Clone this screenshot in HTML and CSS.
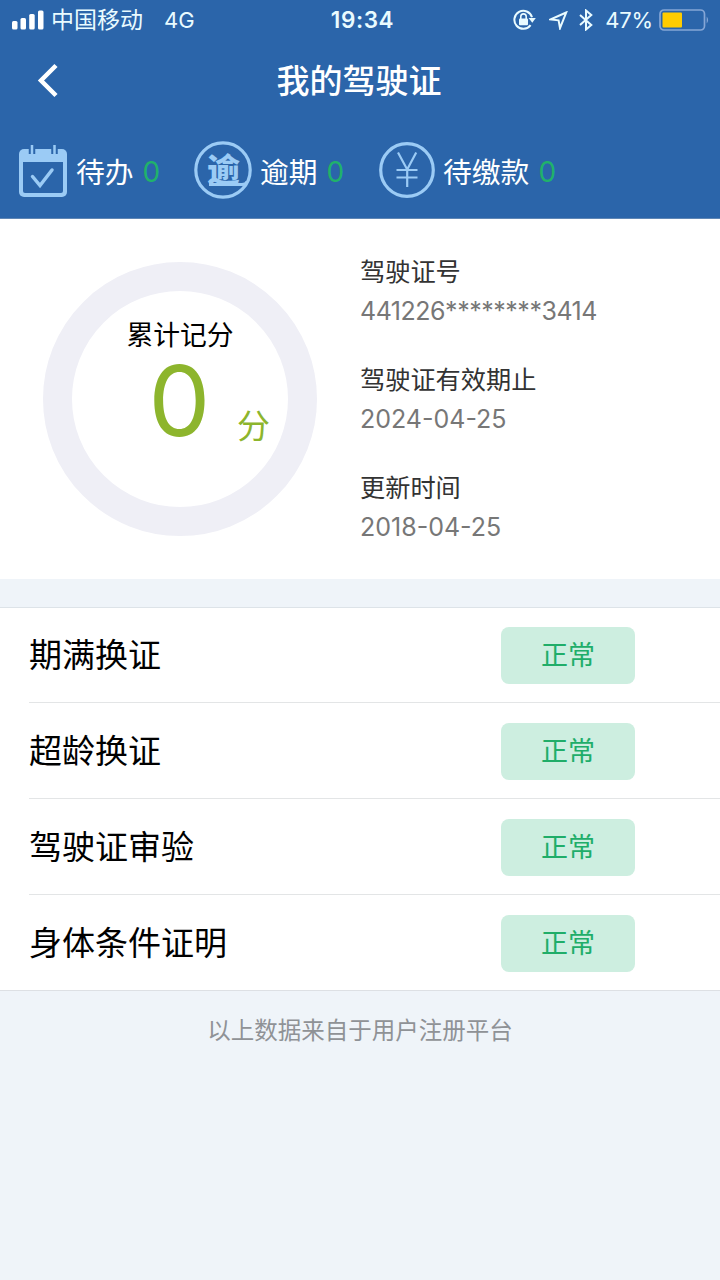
FILE: index.html
```html
<!DOCTYPE html>
<html lang="zh-CN">
<head>
    <meta charset="UTF-8">
    <meta name="viewport" content="width=device-width, initial-scale=1.0">
    <title>我的驾驶证</title>
    <link rel="stylesheet" href="styles.css">
</head>
<body>

  <header class="top">
    <div class="status">
      <div class="status-left">
        <svg class="signal" width="32" height="20" viewBox="0 0 32 20" fill="#fff">
          <rect x="0" y="11" width="5.5" height="8.5" rx="1.5" />
          <rect x="8.5" y="8" width="5.5" height="11.5" rx="1.5" />
          <rect x="17.2" y="4" width="5.5" height="15.5" rx="1.5" />
          <rect x="26" y="0.5" width="5.5" height="19" rx="1.5" />
        </svg>
        <span class="carrier">中国移动</span>
        <span class="network">4G</span>
      </div>
      <span class="clock">19:34</span>
      <div class="status-right">
        <svg class="lock" width="23" height="22" viewBox="0 0 23 22">
          <path d="M17.6 16.2A9 9 0 1 1 19 8.2" fill="none" stroke="#e9fbff" stroke-width="2" />
          <path d="M15.6 9h7.2l-3.5 4.8z" fill="#e9fbff" />
          <rect x="6" y="9.5" width="9" height="6.7" rx="1" fill="#e9fbff" />
          <path d="M7.8 10V7.6a2.7 2.7 0 0 1 5.400 0V10" fill="none" stroke="#e9fbff" stroke-width="1.6" />
        </svg>
        <svg class="arrow" width="19" height="19" viewBox="0 0 19 19">
          <path d="M17.2 1.5L1.8 8.4l7.800.9 1.400 7.900z" fill="none" stroke="#e9fbff" stroke-width="2" />
        </svg>
        <svg class="bluetooth" width="14" height="22" viewBox="0 0 14 22">
          <path d="M1 6l11.3 10L7 20.5v-19L12.3 6 1 16" fill="none" stroke="#e9fbff" stroke-width="2" />
        </svg>
        <span class="percent">47%</span>
        <svg class="battery" width="51" height="22" viewBox="0 0 51 22">
          <rect x="1" y="1" width="44.5" height="20" rx="4" fill="none" stroke="#85a6d6" stroke-width="1.7" />
          <rect x="3.5" y="3.5" width="19.5" height="15" rx="1" fill="#fc0" />
          <path d="M47.7 7.5q2.8 3.5 0 7z" fill="#85a6d6" />
        </svg>
      </div>
    </div>

    <div class="nav">
      <svg class="back" width="22" height="36" viewBox="0 0 22 36">
        <path d="M19 2.500L4 17.500l15 15" fill="none" stroke="#fff" stroke-width="4.500" />
      </svg>
      <h1>我的驾驶证</h1>
    </div>

    <div class="tabs">
      <div class="tab tab-todo">
        <svg class="calendar" width="50" height="54" viewBox="0 0 50 54">
          <path d="M6 5h38a5 5 0 0 1 5 5v38a5 5 0 0 1-5 5H6a5 5 0 0 1-5-5V10a5 5 0 0 1 5-5z" fill="#9bcbf5" />
          <path d="M5 18h40v29a2 2 0 0 1-2 2H7a2 2 0 0 1-2-2z" fill="#2b65aa" />
          <path d="M14 1v9M36.5 1v9" stroke="#2b65aa" stroke-width="6.5" />
          <path d="M14 1v9M36.5 1v9" stroke="#9bcbf5" stroke-width="2.5" />
          <path d="M14.500 32.500l7.500 9L34 26" fill="none" stroke="#9bcbf5" stroke-width="3.500" stroke-linecap="round" />
        </svg>
        <span class="name">待办</span><span class="num">0</span>
      </div>
      <div class="tab tab-overdue">
        <svg width="58" height="58" viewBox="0 0 58 58">
          <circle cx="29" cy="29" r="27.2" fill="none" stroke="#9bcbf5" stroke-width="3.2" />
          <text x="13" y="41" class="mark">逾</text>
          <path d="M15 43.500h33q4 0 5-3" fill="none" stroke="#9bcbf5" stroke-width="2.8" />
        </svg>
        <span class="name">逾期</span><span class="num">0</span>
      </div>
      <div class="tab tab-pay">
        <svg width="56" height="56" viewBox="0 0 56 56">
          <circle cx="28" cy="28" r="26.3" fill="none" stroke="#9bcbf5" stroke-width="3.2" />
          <path d="M19 10.5l9.200 17 9-17M28.200 27.500V45M17.500 28h21M17.500 35.500h21" fill="none" stroke="#9bcbf5" stroke-width="2.2" />
        </svg>
        <span class="name">待缴款</span><span class="num">0</span>
      </div>
    </div>
  </header>

  <section class="summary">
    <div class="ring">
      <p class="ring-title">累计记分</p>
      <div class="score"><span class="score-num">0</span><span class="score-unit">分</span></div>
    </div>
    <dl class="info">
      <dt>驾驶证号</dt>
      <dd class="licence-no">441226********3414</dd>
      <dt>驾驶证有效期止</dt>
      <dd>2024-04-25</dd>
      <dt>更新时间</dt>
      <dd>2018-04-25</dd>
    </dl>
  </section>

  <ul class="list">
    <li><span class="item">期满换证</span><span class="badge">正常</span></li>
    <li><span class="item">超龄换证</span><span class="badge">正常</span></li>
    <li><span class="item">驾驶证审验</span><span class="badge">正常</span></li>
    <li><span class="item">身体条件证明</span><span class="badge">正常</span></li>
  </ul>

  <p class="source">以上数据来自于用户注册平台</p>

</body>
</html>
```
FILE: styles.css
```css
* {
  box-sizing: border-box;
  margin: 0;
  padding: 0;
}

body {
  width: 720px;
  min-height: 1280px;
  background-color: #eff4f9;
  font-family: Inter, "Noto Sans CJK SC", sans-serif;
  color: #000;
}

svg {
  display: block;
  flex: none;
}

.top {
  height: 219px;
  background-color: #2b65aa;
  border-bottom: 1px solid #5f86b5;
  color: #fff;
}

/* status bar */
.status {
  display: grid;
  grid-template-columns: 1fr 70px 1fr;
  align-items: center;
  height: 40px;
  padding: 0 10px 0 12px;
  line-height: 40px;
  color: #e9fbff;
}

.status-left,
.status-right {
  display: flex;
  align-items: center;
}

.status-right {
  justify-content: flex-end;
}

.carrier {
  margin-left: 7px;
  font-size: 23px;
}

.network {
  margin-left: 21px;
  font-size: 22px;
}

.clock {
  padding-left: 3px;
  text-align: center;
  font-size: 22.5px;
  font-weight: 600;
  letter-spacing: 0.6px;
}

.arrow {
  margin-left: 13px;
}

.bluetooth {
  margin-left: 11px;
}

.percent {
  margin-left: 12px;
  font-size: 22px;
  letter-spacing: -0.2px;
}

.battery {
  margin-left: 6px;
}

/* title */
.nav {
  display: grid;
  grid-template-columns: 80px 1fr 82px;
  align-items: center;
  height: 82px;
}

.back {
  margin-left: 37px;
}

.nav h1 {
  text-align: center;
  font-size: 33px;
  font-weight: 500;
  line-height: 82px;
}

/* counters */
.tabs {
  display: flex;
  align-items: center;
  height: 96px;
  padding-left: 18px;
}

.tab {
  display: flex;
  align-items: center;
  height: 58px;
  line-height: 58px;
  font-size: 28.8px;
}

.tab .name {
  margin: 5px 0 0 8px;
}

.tab .num {
  margin: 4px 0 0 9px;
  color: #20b26b;
  font-size: 28px;
}

.calendar {
  margin-top: 2px;
}

.tab-todo {
  width: 176px;
}

.tab-overdue {
  width: 185px;
}

.mark {
  font-family: "Noto Sans CJK SC", sans-serif;
  font-size: 33px;
  font-weight: 900;
  fill: #9bcbf5;
}

/* score and licence data */
.summary {
  display: flex;
  height: 360px;
  padding: 43px 0 0 43px;
  background-color: #fff;
}

.ring {
  width: 274px;
  height: 274px;
  border: 29px solid #efeff6;
  border-radius: 50%;
}

.ring-title {
  margin-top: 24px;
  text-align: center;
  font-size: 26.8px;
  line-height: 40px;
}

.score {
  display: flex;
  align-items: baseline;
  padding-left: 76px;
  color: #8db52d;
  line-height: 92px;
}

.score-num {
  width: 63px;
  text-align: center;
  font-size: 98px;
  font-weight: 400;
}

.score-unit {
  margin-left: 26px;
  padding-top: 1px;
  font-size: 33px;
}

/* the unit hangs slightly below the digit */
.score-unit {
  align-self: flex-start;
  margin-top: 24px;
}

.info {
  margin: -9px 0 0 43px;
}

.info dt {
  color: #333;
  font-size: 25.2px;
  line-height: 38px;
}

.info dd {
  margin-bottom: 30px;
  color: #777;
  font-size: 25px;
  line-height: 40px;
}

.info .licence-no {
  letter-spacing: -0.48px;
}

/* business list */
.list {
  margin-top: 28px;
  border-top: 1px solid #dde3e8;
  border-bottom: 1px solid #dde0e4;
  background-color: #fff;
  list-style: none;
}

.list li {
  display: flex;
  align-items: center;
  justify-content: space-between;
  height: 96px;
  margin-left: 29px;
  padding: 1px 85px 0 0;
  border-bottom: 1px solid #e3e5e6;
  font-size: 33px;
}

.list li:first-child {
  height: 95px;
}

.list li:last-child {
  height: 95px;
  border-bottom: none;
}

.item {
  padding-bottom: 5px;
}

.badge {
  width: 134px;
  height: 57px;
  border-radius: 8px;
  background-color: #cdeee0;
  color: #20ad69;
  text-align: center;
  font-size: 27px;
  line-height: 58px;
}

.source {
  margin-top: 20px;
  text-align: center;
  color: #8f9296;
  font-size: 23.5px;
  line-height: 40px;
}
```
